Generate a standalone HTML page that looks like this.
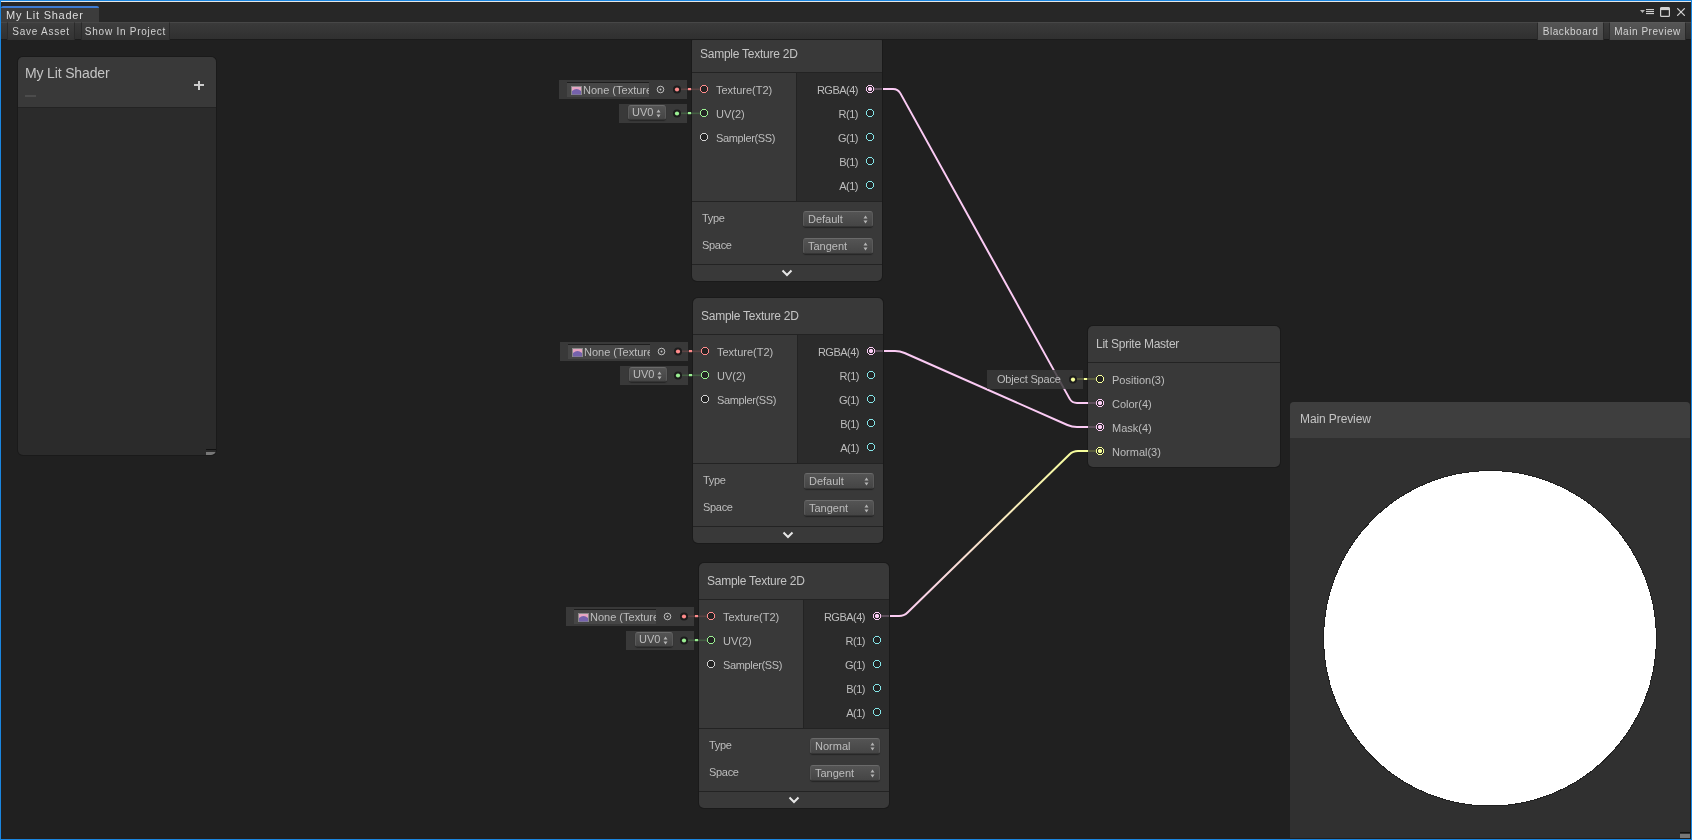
<!DOCTYPE html>
<html><head><meta charset="utf-8"><title>My Lit Shader</title><style>
*{margin:0;padding:0;box-sizing:border-box}
html,body{width:1692px;height:840px;overflow:hidden;background:#202020;font-family:"Liberation Sans", sans-serif;position:relative}
div,span{position:absolute}
#root{left:0;top:0;width:1692px;height:840px;will-change:transform}
svg.full{position:absolute;left:0;top:0}
.node{background:#393939;border-radius:5px;box-shadow:0 0 0 1px #1a1a1a;overflow:hidden}
.ntitle{left:0;top:0;width:190px;height:37px;border-bottom:1px solid #232323;color:#c4c4c4;font-size:12px;letter-spacing:-0.25px;line-height:16px;padding:10px 0 0 8px;white-space:nowrap}
.nout{left:104px;top:37px;width:86px;height:128px;background:#2b2b2b;border-left:1px solid #232323}
.nset{left:0;top:165px;width:190px;height:63px;border-top:1px solid #232323}
.ncol{left:0;top:228px;width:190px;height:17px;border-top:1px solid #232323}
.plab{font-size:11px;color:#bdbdbd;white-space:nowrap;line-height:14px}
.plab.r{letter-spacing:-0.5px}
.slab{left:10px;font-size:11px;letter-spacing:-0.3px;color:#bdbdbd;line-height:14px}
.dd{left:111px;width:70px;height:16px;background:linear-gradient(#545454,#454545);border:1px solid #5a5a5a;border-top-color:#6a6a6a;border-bottom-color:#353535;box-shadow:0 1px 1px #262626;border-radius:3px;color:#bdbdbd;font-size:11px;line-height:14px;padding-left:4px;white-space:nowrap}
.chev{position:absolute;left:89px;top:233px}
.inl{background:#393939}
.os{background:rgba(58,58,58,0.85);color:#bdbdbd;font-size:11px;letter-spacing:-0.2px;line-height:19px;padding-left:10px;white-space:nowrap}
.objf{background:#464646;border-top:1px solid #1e1e1e;overflow:hidden;white-space:nowrap}
.objf .ot{left:16px;top:0;color:#bdbdbd;font-size:11px;line-height:14px;white-space:nowrap}
.texicon{left:4px;top:3px;width:10px;height:8px;background:linear-gradient(#e0a8c8 0%,#b08ccc 40%,#7a6ad0 100%)}
.uvdd{width:38px;height:15px;background:linear-gradient(#545454,#454545);border:1px solid #5a5a5a;border-top-color:#6a6a6a;border-bottom-color:#353535;box-shadow:0 1px 1px #262626;border-radius:3px;color:#bdbdbd;font-size:11px;line-height:13px;padding-left:3px}
.tab{background:#3c3c3c;border-top:2px solid #3d7bd4;border-radius:2px 2px 0 0;color:#dedede;font-size:11px;letter-spacing:0.75px;line-height:13px;padding:1px 0 0 5px;white-space:nowrap}
.tbtn{top:22px;height:18px;background:linear-gradient(#3e3e3e,#333333);border-top:1px solid #474747;border-left:1px solid #2a2a2a;border-right:1px solid #2a2a2a;color:#d2d2d2;font-size:10px;letter-spacing:0.75px;line-height:16px;padding-top:1px;text-align:center;white-space:nowrap}
.tbtn.hi{background:linear-gradient(#555555,#494949);border-top-color:#5a5a5a;letter-spacing:0.55px}
.bb{background:#2b2b2b;border-radius:5px;box-shadow:0 0 0 1px #1a1a1a;overflow:hidden}
.mp{background:#303030;border-radius:4px 4px 0 0;overflow:hidden}
</style></head><body>
<div id="root">
<div class="node" style="left:692px;top:36px;width:190px;height:245px"><div class="ntitle">Sample Texture 2D</div><div class="nout"></div><div class="nset"></div><div class="ncol"></div><div class="plab" style="left:24px;top:47px">Texture(T2)</div><div class="plab" style="left:24px;top:71px">UV(2)</div><div class="plab" style="left:24px;top:95px;letter-spacing:-0.35px">Sampler(SS)</div><div class="plab r" style="right:24px;top:47px">RGBA(4)</div><div class="plab r" style="right:24px;top:71px">R(1)</div><div class="plab r" style="right:24px;top:95px">G(1)</div><div class="plab r" style="right:24px;top:119px">B(1)</div><div class="plab r" style="right:24px;top:143px">A(1)</div><div class="slab" style="top:175px">Type</div><div class="slab" style="top:202px">Space</div><div class="dd" style="top:175px">Default<svg style="position:absolute;left:59px;top:3px" width="5" height="9" viewBox="0 0 5 9"><path d="M0.5 3.5 L2.5 0.5 L4.5 3.5 Z M0.5 5.5 L2.5 8.5 L4.5 5.5 Z" fill="#b4b4b4"/></svg></div><div class="dd" style="top:202px">Tangent<svg style="position:absolute;left:59px;top:3px" width="5" height="9" viewBox="0 0 5 9"><path d="M0.5 3.5 L2.5 0.5 L4.5 3.5 Z M0.5 5.5 L2.5 8.5 L4.5 5.5 Z" fill="#b4b4b4"/></svg></div><svg class="chev" width="12" height="8" viewBox="0 0 12 8"><path d="M1.5 1.5 L6 6 L10.5 1.5" fill="none" stroke="#e6e6e6" stroke-width="2"/></svg></div><div class="inl" style="left:559px;top:80px;width:128px;height:19px"></div><div class="objf" style="left:567px;top:82px;width:82px;height:15px"><svg style="position:absolute;left:4px;top:3px" width="11" height="9" viewBox="0 0 11 9"><rect x="0.5" y="0.5" width="10" height="8" fill="#e6a6c2" stroke="#8a8a8a" stroke-width="1"/><path d="M1 8.5 L1 5 Q5.5 0.8 10 5 L10 8.5 Z" fill="#7562ac"/></svg><span class="ot">None (Texture</span></div><div class="inl" style="left:619px;top:104px;width:68px;height:19px"></div><div class="uvdd" style="left:628px;top:105px">UV0<svg style="position:absolute;left:27px;top:3px" width="5" height="9" viewBox="0 0 5 9"><path d="M0.5 3.5 L2.5 0.5 L4.5 3.5 Z M0.5 5.5 L2.5 8.5 L4.5 5.5 Z" fill="#b4b4b4"/></svg></div><div class="node" style="left:693px;top:298px;width:190px;height:245px"><div class="ntitle">Sample Texture 2D</div><div class="nout"></div><div class="nset"></div><div class="ncol"></div><div class="plab" style="left:24px;top:47px">Texture(T2)</div><div class="plab" style="left:24px;top:71px">UV(2)</div><div class="plab" style="left:24px;top:95px;letter-spacing:-0.35px">Sampler(SS)</div><div class="plab r" style="right:24px;top:47px">RGBA(4)</div><div class="plab r" style="right:24px;top:71px">R(1)</div><div class="plab r" style="right:24px;top:95px">G(1)</div><div class="plab r" style="right:24px;top:119px">B(1)</div><div class="plab r" style="right:24px;top:143px">A(1)</div><div class="slab" style="top:175px">Type</div><div class="slab" style="top:202px">Space</div><div class="dd" style="top:175px">Default<svg style="position:absolute;left:59px;top:3px" width="5" height="9" viewBox="0 0 5 9"><path d="M0.5 3.5 L2.5 0.5 L4.5 3.5 Z M0.5 5.5 L2.5 8.5 L4.5 5.5 Z" fill="#b4b4b4"/></svg></div><div class="dd" style="top:202px">Tangent<svg style="position:absolute;left:59px;top:3px" width="5" height="9" viewBox="0 0 5 9"><path d="M0.5 3.5 L2.5 0.5 L4.5 3.5 Z M0.5 5.5 L2.5 8.5 L4.5 5.5 Z" fill="#b4b4b4"/></svg></div><svg class="chev" width="12" height="8" viewBox="0 0 12 8"><path d="M1.5 1.5 L6 6 L10.5 1.5" fill="none" stroke="#e6e6e6" stroke-width="2"/></svg></div><div class="inl" style="left:560px;top:342px;width:128px;height:19px"></div><div class="objf" style="left:568px;top:344px;width:82px;height:15px"><svg style="position:absolute;left:4px;top:3px" width="11" height="9" viewBox="0 0 11 9"><rect x="0.5" y="0.5" width="10" height="8" fill="#e6a6c2" stroke="#8a8a8a" stroke-width="1"/><path d="M1 8.5 L1 5 Q5.5 0.8 10 5 L10 8.5 Z" fill="#7562ac"/></svg><span class="ot">None (Texture</span></div><div class="inl" style="left:620px;top:366px;width:68px;height:19px"></div><div class="uvdd" style="left:629px;top:367px">UV0<svg style="position:absolute;left:27px;top:3px" width="5" height="9" viewBox="0 0 5 9"><path d="M0.5 3.5 L2.5 0.5 L4.5 3.5 Z M0.5 5.5 L2.5 8.5 L4.5 5.5 Z" fill="#b4b4b4"/></svg></div><div class="node" style="left:699px;top:563px;width:190px;height:245px"><div class="ntitle">Sample Texture 2D</div><div class="nout"></div><div class="nset"></div><div class="ncol"></div><div class="plab" style="left:24px;top:47px">Texture(T2)</div><div class="plab" style="left:24px;top:71px">UV(2)</div><div class="plab" style="left:24px;top:95px;letter-spacing:-0.35px">Sampler(SS)</div><div class="plab r" style="right:24px;top:47px">RGBA(4)</div><div class="plab r" style="right:24px;top:71px">R(1)</div><div class="plab r" style="right:24px;top:95px">G(1)</div><div class="plab r" style="right:24px;top:119px">B(1)</div><div class="plab r" style="right:24px;top:143px">A(1)</div><div class="slab" style="top:175px">Type</div><div class="slab" style="top:202px">Space</div><div class="dd" style="top:175px">Normal<svg style="position:absolute;left:59px;top:3px" width="5" height="9" viewBox="0 0 5 9"><path d="M0.5 3.5 L2.5 0.5 L4.5 3.5 Z M0.5 5.5 L2.5 8.5 L4.5 5.5 Z" fill="#b4b4b4"/></svg></div><div class="dd" style="top:202px">Tangent<svg style="position:absolute;left:59px;top:3px" width="5" height="9" viewBox="0 0 5 9"><path d="M0.5 3.5 L2.5 0.5 L4.5 3.5 Z M0.5 5.5 L2.5 8.5 L4.5 5.5 Z" fill="#b4b4b4"/></svg></div><svg class="chev" width="12" height="8" viewBox="0 0 12 8"><path d="M1.5 1.5 L6 6 L10.5 1.5" fill="none" stroke="#e6e6e6" stroke-width="2"/></svg></div><div class="inl" style="left:566px;top:607px;width:128px;height:19px"></div><div class="objf" style="left:574px;top:609px;width:82px;height:15px"><svg style="position:absolute;left:4px;top:3px" width="11" height="9" viewBox="0 0 11 9"><rect x="0.5" y="0.5" width="10" height="8" fill="#e6a6c2" stroke="#8a8a8a" stroke-width="1"/><path d="M1 8.5 L1 5 Q5.5 0.8 10 5 L10 8.5 Z" fill="#7562ac"/></svg><span class="ot">None (Texture</span></div><div class="inl" style="left:626px;top:631px;width:68px;height:19px"></div><div class="uvdd" style="left:635px;top:632px">UV0<svg style="position:absolute;left:27px;top:3px" width="5" height="9" viewBox="0 0 5 9"><path d="M0.5 3.5 L2.5 0.5 L4.5 3.5 Z M0.5 5.5 L2.5 8.5 L4.5 5.5 Z" fill="#b4b4b4"/></svg></div><div class="node" style="left:1088px;top:326px;width:192px;height:141px"><div class="ntitle" style="width:192px">Lit Sprite Master</div><div class="plab" style="left:24px;top:47px">Position(3)</div><div class="plab" style="left:24px;top:71px">Color(4)</div><div class="plab" style="left:24px;top:95px">Mask(4)</div><div class="plab" style="left:24px;top:119px">Normal(3)</div></div>
<svg class="full" width="1692" height="840" viewBox="0 0 1692 840"><defs><linearGradient id="g3" gradientUnits="userSpaceOnUse" x1="889" y1="616" x2="1088" y2="451"><stop offset="0" stop-color="#fbcbf4"/><stop offset="1" stop-color="#f6ff9a"/></linearGradient></defs><path d="M883,89 L893.00,89.00 Q898,89 900.42,93.37 L1069.58,398.63 Q1072,403 1077.00,403.00 L1088,403" fill="none" stroke="#fbcbf4" stroke-width="2"/><path d="M884,351 L895.00,351.00 Q900,351 904.57,353.02 L1067.43,424.98 Q1072,427 1077.00,427.00 L1088,427" fill="none" stroke="#fbcbf4" stroke-width="2"/><path d="M890,616 L899.00,616.00 Q904,616 907.58,612.51 L1069.42,454.49 Q1073,451 1078.00,451.00 L1088,451" fill="none" stroke="url(#g3)" stroke-width="2"/><circle cx="704" cy="89" r="3.5" fill="#232323" stroke="#ff8b8b" stroke-width="1" shape-rendering="crispEdges"/><circle cx="704" cy="113" r="3.5" fill="#232323" stroke="#9aef92" stroke-width="1" shape-rendering="crispEdges"/><circle cx="704" cy="137" r="3.5" fill="#232323" stroke="#d0d0d0" stroke-width="1" shape-rendering="crispEdges"/><circle cx="870" cy="89" r="3.5" fill="#232323" stroke="#fbcbf4" stroke-width="1" shape-rendering="crispEdges"/><path d="M869,87 L871,87 L872,88 L872,90 L871,91 L869,91 L868,90 L868,88 Z" fill="#fbcbf4"/><circle cx="870" cy="113" r="3.5" fill="#232323" stroke="#84e4e7" stroke-width="1" shape-rendering="crispEdges"/><circle cx="870" cy="137" r="3.5" fill="#232323" stroke="#84e4e7" stroke-width="1" shape-rendering="crispEdges"/><circle cx="870" cy="161" r="3.5" fill="#232323" stroke="#84e4e7" stroke-width="1" shape-rendering="crispEdges"/><circle cx="870" cy="185" r="3.5" fill="#232323" stroke="#84e4e7" stroke-width="1" shape-rendering="crispEdges"/><circle cx="660.5" cy="89.5" r="3.3" fill="none" stroke="#c0c0c0" stroke-width="1"/><circle cx="660.5" cy="89.5" r="1" fill="#c0c0c0"/><rect x="681" y="88.5" width="19" height="1.6" fill="#5a4343"/><rect x="688" y="88" width="3" height="2.2" fill="#ff8b8b"/><circle cx="677" cy="89.5" r="4" fill="#1c1c1c"/><circle cx="677" cy="89.5" r="2.1" fill="#ff8b8b"/><rect x="681" y="112.5" width="19" height="1.6" fill="#435c42"/><rect x="688" y="112" width="3" height="2.2" fill="#9aef92"/><circle cx="677" cy="113.5" r="4" fill="#1c1c1c"/><circle cx="677" cy="113.5" r="2.1" fill="#9aef92"/><rect x="874" y="88" width="8" height="2" fill="#5e505c"/><circle cx="705" cy="351" r="3.5" fill="#232323" stroke="#ff8b8b" stroke-width="1" shape-rendering="crispEdges"/><circle cx="705" cy="375" r="3.5" fill="#232323" stroke="#9aef92" stroke-width="1" shape-rendering="crispEdges"/><circle cx="705" cy="399" r="3.5" fill="#232323" stroke="#d0d0d0" stroke-width="1" shape-rendering="crispEdges"/><circle cx="871" cy="351" r="3.5" fill="#232323" stroke="#fbcbf4" stroke-width="1" shape-rendering="crispEdges"/><path d="M870,349 L872,349 L873,350 L873,352 L872,353 L870,353 L869,352 L869,350 Z" fill="#fbcbf4"/><circle cx="871" cy="375" r="3.5" fill="#232323" stroke="#84e4e7" stroke-width="1" shape-rendering="crispEdges"/><circle cx="871" cy="399" r="3.5" fill="#232323" stroke="#84e4e7" stroke-width="1" shape-rendering="crispEdges"/><circle cx="871" cy="423" r="3.5" fill="#232323" stroke="#84e4e7" stroke-width="1" shape-rendering="crispEdges"/><circle cx="871" cy="447" r="3.5" fill="#232323" stroke="#84e4e7" stroke-width="1" shape-rendering="crispEdges"/><circle cx="661.5" cy="351.5" r="3.3" fill="none" stroke="#c0c0c0" stroke-width="1"/><circle cx="661.5" cy="351.5" r="1" fill="#c0c0c0"/><rect x="682" y="350.5" width="19" height="1.6" fill="#5a4343"/><rect x="689" y="350" width="3" height="2.2" fill="#ff8b8b"/><circle cx="678" cy="351.5" r="4" fill="#1c1c1c"/><circle cx="678" cy="351.5" r="2.1" fill="#ff8b8b"/><rect x="682" y="374.5" width="19" height="1.6" fill="#435c42"/><rect x="689" y="374" width="3" height="2.2" fill="#9aef92"/><circle cx="678" cy="375.5" r="4" fill="#1c1c1c"/><circle cx="678" cy="375.5" r="2.1" fill="#9aef92"/><rect x="875" y="350" width="8" height="2" fill="#5e505c"/><circle cx="711" cy="616" r="3.5" fill="#232323" stroke="#ff8b8b" stroke-width="1" shape-rendering="crispEdges"/><circle cx="711" cy="640" r="3.5" fill="#232323" stroke="#9aef92" stroke-width="1" shape-rendering="crispEdges"/><circle cx="711" cy="664" r="3.5" fill="#232323" stroke="#d0d0d0" stroke-width="1" shape-rendering="crispEdges"/><circle cx="877" cy="616" r="3.5" fill="#232323" stroke="#fbcbf4" stroke-width="1" shape-rendering="crispEdges"/><path d="M876,614 L878,614 L879,615 L879,617 L878,618 L876,618 L875,617 L875,615 Z" fill="#fbcbf4"/><circle cx="877" cy="640" r="3.5" fill="#232323" stroke="#84e4e7" stroke-width="1" shape-rendering="crispEdges"/><circle cx="877" cy="664" r="3.5" fill="#232323" stroke="#84e4e7" stroke-width="1" shape-rendering="crispEdges"/><circle cx="877" cy="688" r="3.5" fill="#232323" stroke="#84e4e7" stroke-width="1" shape-rendering="crispEdges"/><circle cx="877" cy="712" r="3.5" fill="#232323" stroke="#84e4e7" stroke-width="1" shape-rendering="crispEdges"/><circle cx="667.5" cy="616.5" r="3.3" fill="none" stroke="#c0c0c0" stroke-width="1"/><circle cx="667.5" cy="616.5" r="1" fill="#c0c0c0"/><rect x="688" y="615.5" width="19" height="1.6" fill="#5a4343"/><rect x="695" y="615" width="3" height="2.2" fill="#ff8b8b"/><circle cx="684" cy="616.5" r="4" fill="#1c1c1c"/><circle cx="684" cy="616.5" r="2.1" fill="#ff8b8b"/><rect x="688" y="639.5" width="19" height="1.6" fill="#435c42"/><rect x="695" y="639" width="3" height="2.2" fill="#9aef92"/><circle cx="684" cy="640.5" r="4" fill="#1c1c1c"/><circle cx="684" cy="640.5" r="2.1" fill="#9aef92"/><rect x="881" y="615" width="8" height="2" fill="#5e505c"/><circle cx="1100" cy="379" r="3.5" fill="#232323" stroke="#f6ff9a" stroke-width="1" shape-rendering="crispEdges"/><rect x="1088" y="402" width="8" height="2" fill="#5e505c"/><circle cx="1100" cy="403" r="3.5" fill="#232323" stroke="#fbcbf4" stroke-width="1" shape-rendering="crispEdges"/><path d="M1099,401 L1101,401 L1102,402 L1102,404 L1101,405 L1099,405 L1098,404 L1098,402 Z" fill="#fbcbf4"/><rect x="1088" y="426" width="8" height="2" fill="#5e505c"/><circle cx="1100" cy="427" r="3.5" fill="#232323" stroke="#fbcbf4" stroke-width="1" shape-rendering="crispEdges"/><path d="M1099,425 L1101,425 L1102,426 L1102,428 L1101,429 L1099,429 L1098,428 L1098,426 Z" fill="#fbcbf4"/><rect x="1088" y="450" width="8" height="2" fill="#595c3e"/><circle cx="1100" cy="451" r="3.5" fill="#232323" stroke="#f6ff9a" stroke-width="1" shape-rendering="crispEdges"/><path d="M1099,449 L1101,449 L1102,450 L1102,452 L1101,453 L1099,453 L1098,452 L1098,450 Z" fill="#f6ff9a"/></svg>
<div class="inl os" style="left:987px;top:370px;width:96px;height:19px">Object Space</div>
<svg class="full" width="1692" height="840" viewBox="0 0 1692 840"><rect x="1076" y="378" width="20" height="2" fill="#595c3e"/><rect x="1084" y="378" width="3" height="2" fill="#f6ff9a"/><circle cx="1073" cy="379.6" r="4" fill="#1c1c1c"/><circle cx="1073" cy="379.6" r="2.1" fill="#f6ff9a"/><circle cx="1100" cy="379" r="3.5" fill="#232323" stroke="#f6ff9a" stroke-width="1" shape-rendering="crispEdges"/></svg>

<div style="left:0;top:0;width:1692px;height:22px;background:#272727"></div>
<div style="left:1px;top:1px;width:1690px;height:1px;background:#e6e6e6"></div>
<div class="tab" style="left:1px;top:6px;width:98px;height:16px">My Lit Shader</div>
<svg width="52" height="12" viewBox="0 0 52 12" style="position:absolute;left:1640px;top:7px">
  <path d="M0 3 L5 3 L2.5 6 Z" fill="#b4b4b4"/>
  <rect x="6" y="2" width="8" height="1.1" fill="#cfcfcf"/><rect x="6" y="4" width="8" height="1.1" fill="#cfcfcf"/><rect x="6" y="6" width="8" height="1.1" fill="#cfcfcf"/>
  <rect x="20.6" y="0.6" width="8.8" height="8.8" rx="1" fill="none" stroke="#d0d0d0" stroke-width="1.2"/><rect x="20.5" y="0.5" width="9" height="2.6" fill="#d0d0d0"/>
  <path d="M37.6 1.6 L44.4 8.4 M44.4 1.6 L37.6 8.4" stroke="#d0d0d0" stroke-width="1.3" stroke-linecap="round"/>
</svg>
<div style="left:1px;top:22px;width:1690px;height:18px;background:linear-gradient(#3a3a3a,#303030);border-top:1px solid #474747;border-bottom:1px solid #1b1b1b"></div>
<div class="tbtn" style="left:7px;width:68px">Save Asset</div>
<div class="tbtn" style="left:81px;width:89px">Show In Project</div>
<div class="tbtn hi" style="left:1537px;width:67px">Blackboard</div>
<div class="tbtn hi" style="left:1609px;width:77px">Main Preview</div>
<div class="bb" style="left:18px;top:57px;width:198px;height:398px">
  <div style="left:0;top:0;width:198px;height:51px;background:#393939;border-bottom:1px solid #232323"></div>
  <div style="left:7px;top:7px;color:#c4c4c4;font-size:14px;letter-spacing:-0.15px;line-height:18px;white-space:nowrap">My Lit Shader</div>
  <div style="left:176px;top:23px;width:10px;height:10px"><div style="left:0;top:4px;width:10px;height:2px;background:#cdcdcd"></div><div style="left:4px;top:0.5px;width:2px;height:9.5px;background:#cdcdcd"></div></div>
  <div style="left:7px;top:38px;width:11px;height:2px;background:#4c4c4c"></div>
  <div style="left:188px;top:392px;width:10px;height:1px;background:#111"></div>
  <div style="left:188px;top:395px;width:10px;height:3px;background:#777"></div>
</div>
<div class="mp" style="left:1290px;top:402px;width:400px;height:436px">
  <div style="left:0;top:0;width:400px;height:36px;background:#3e3e3e"></div>
  <div style="left:10px;top:9px;color:#c4c4c4;font-size:12px;letter-spacing:-0.1px;line-height:16px;white-space:nowrap">Main Preview</div>
  <svg width="400" height="436" style="position:absolute;left:0;top:0"><ellipse cx="200" cy="236.25" rx="166.5" ry="167.75" fill="#fff" stroke="#1f1f1f" stroke-width="1" shape-rendering="crispEdges"/></svg>
  <div style="left:390px;top:430px;width:10px;height:1px;background:#111"></div>
  <div style="left:390px;top:432px;width:10px;height:4px;background:#777"></div>
</div>
<div style="left:0;top:0;width:1px;height:840px;background:#1a86e0"></div>
<div style="left:0;top:0;width:1692px;height:1px;background:#1a86e0"></div>
<div style="left:1691px;top:0;width:1px;height:840px;background:#1a86e0"></div>
<div style="left:0;top:839px;width:1692px;height:1px;background:#1a86e0"></div>

</div>
</body></html>
